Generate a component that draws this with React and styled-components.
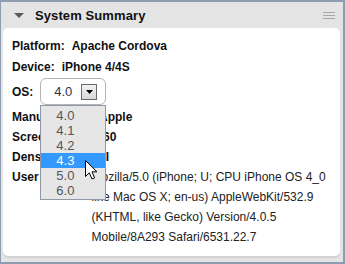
import React from "react";
import styled, { createGlobalStyle } from "styled-components";

const Global = createGlobalStyle`
  html, body {
    margin: 0;
    padding: 0;
    width: 345px;
    height: 264px;
    overflow: hidden;
    background: #fff;
    font-family: "Liberation Sans", Arial, sans-serif;
  }
`;

const OS_VERSIONS = ["4.0", "4.1", "4.2", "4.3", "5.0", "6.0"];

const App = () => {
  return (
    <>
      <Global />
      <Panel>
        <Header>
          <svg width="10" height="5" viewBox="0 0 10 5">
            <path d="M0 0 L10 0 L5 5 Z" fill="#5a5a5a" />
          </svg>
          <Title>System Summary</Title>
          <Grip>
            <svg width="12" height="7" viewBox="0 0 12 7">
              <rect x="0" y="0" width="12" height="1" fill="#a8a8a8" />
              <rect x="0" y="3" width="12" height="1" fill="#a8a8a8" />
              <rect x="0" y="6" width="12" height="1" fill="#a8a8a8" />
            </svg>
          </Grip>
        </Header>
        <Card>
          <Row>
            <Label>Platform:</Label>
            <Value>Apache Cordova</Value>
          </Row>
          <Row $top={1}>
            <Label>Device:</Label>
            <Value>iPhone 4/4S</Value>
          </Row>
          <OsRow>
            <Label>OS:</Label>
            <SelectWrap>
              <Select>
                <SelectText>4.0</SelectText>
                <ArrowButton>
                  <svg width="7" height="4" viewBox="0 0 7 4">
                    <path d="M0 0 L7 0 L3.5 4 Z" fill="#000" />
                  </svg>
                </ArrowButton>
              </Select>
              <List>
                {OS_VERSIONS.map((v) => (
                  <Item key={v} $active={v === "4.3"}>
                    {v}
                  </Item>
                ))}
              </List>
              <Cursor width="13" height="20" viewBox="0 0 13 20">
                <path
                  d="M0.5 0.5 L0.5 16.5 L4.3 12.8 L7 19 L9.6 17.9 L7 11.8 L12 11.8 Z"
                  fill="#fff"
                  stroke="#000"
                  strokeWidth="1"
                  strokeLinejoin="miter"
                />
              </Cursor>
            </SelectWrap>
          </OsRow>
          <Row>
            <Label>Manufacturer:</Label>
            <Value>Apple</Value>
          </Row>
          <Row>
            <Label>Screen:</Label>
            <Value>640 x 960</Value>
          </Row>
          <Row>
            <Label>Density:</Label>
            <Value>326 PPI</Value>
          </Row>
          <Row>
            <Label>User Agent:</Label>
            <AgentValue>
              Mozilla/5.0 (iPhone; U; CPU iPhone OS 4_0 like Mac OS X; en-us)
              AppleWebKit/532.9 (KHTML, like Gecko) Version/4.0.5
              Mobile/8A293 Safari/6531.22.7
            </AgentValue>
          </Row>
        </Card>
      </Panel>
    </>
  );
};

const Panel = styled.div`
  box-sizing: border-box;
  width: 345px;
  height: 264px;
  display: flex;
  flex-direction: column;
  background: #e4e4e4;
  border-style: solid;
  border-color: #8e9cb2;
  border-width: 2px 2px 2px 1px;
`;

const Header = styled.div`
  height: 26px;
  flex: none;
  display: flex;
  align-items: center;
  padding: 0 8px 0 13px;
  svg {
    display: block;
  }
`;

const Title = styled.div`
  margin-left: 11px;
  font-size: 13px;
  font-weight: bold;
  color: #111;
  letter-spacing: 0.1px;
`;

const Grip = styled.div`
  margin-left: auto;
  margin-top: 1px;
`;

const Card = styled.div`
  flex: 1;
  margin: 0 3px 6px 2px;
  padding: 8px 9px;
  background: #fff;
  border-radius: 5px;
  box-shadow: 0 2px 1px rgba(0, 0, 0, 0.08);
  display: flex;
  flex-direction: column;
`;

const Row = styled.div`
  display: flex;
  align-items: flex-start;
  line-height: 20px;
  font-size: 12px;
  margin-top: ${(p) => p.$top || 0}px;
`;

const Label = styled.span`
  font-weight: bold;
  color: #111;
  white-space: nowrap;
`;

const Value = styled.span`
  margin-left: 7px;
  font-weight: bold;
  color: #111;
`;

const AgentValue = styled.span`
  margin-left: 12px;
  flex: 1;
  color: #222;
`;

const OsRow = styled.div`
  display: flex;
  align-items: center;
  height: 27px;
  margin: 1px 0 2px;
  font-size: 12px;
`;

const SelectWrap = styled.div`
  position: relative;
  margin-left: 7px;
  width: 66px;
`;

const Select = styled.div`
  box-sizing: border-box;
  height: 27px;
  display: flex;
  align-items: center;
  justify-content: flex-end;
  gap: 9px;
  padding-right: 8px;
  border: 1px solid #b4b4b4;
  border-radius: 6px;
  background: #fff;
`;

const SelectText = styled.span`
  font-size: 13px;
  color: #2a3350;
`;

const ArrowButton = styled.div`
  box-sizing: border-box;
  width: 16px;
  height: 16px;
  display: flex;
  align-items: center;
  justify-content: center;
  border: 1px solid #6a6a6a;
  background: linear-gradient(#f2f2f2, #d8d8d8);
  svg {
    display: block;
  }
`;

const List = styled.div`
  position: absolute;
  top: 27px;
  left: 0;
  box-sizing: border-box;
  width: 66px;
  padding: 2px 0 1px;
  background: #e6e6e6;
  border: 1px solid #8e98a8;
  z-index: 2;
`;

const Item = styled.div`
  height: 15px;
  line-height: 15px;
  padding-left: 15px;
  font-size: 13px;
  color: ${(p) => (p.$active ? "#fff" : "#555")};
  background: ${(p) => (p.$active ? "#3399ff" : "transparent")};
`;

const Cursor = styled.svg`
  position: absolute;
  left: 45px;
  top: 82px;
  z-index: 3;
`;

export default App;
